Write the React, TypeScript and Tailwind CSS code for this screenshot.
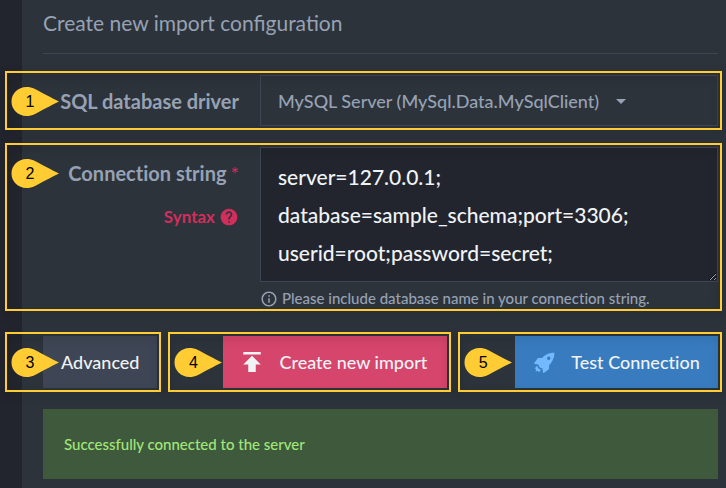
import React, { useState } from 'react';
import { IoMdRocket } from 'react-icons/io';
import { MdArrowDropDown, MdHelp, MdInfoOutline, MdPublish } from 'react-icons/md';

interface CalloutProps {
  step: number;
  className?: string;
  children: React.ReactNode;
}

// Highlighted area with a numbered marker on its left edge
const Callout: React.FC<CalloutProps> = ({ step, className = '', children }) => {
  return (
    <div className={`relative p-1 ${className}`}>
      {children}
      <div className="pointer-events-none absolute inset-0 border-2 border-[#ffcc33] drop-shadow-[0_4px_4px_rgba(0,0,0,0.3)]" />
      <div className="pointer-events-none absolute left-1.5 top-4 h-[29px] w-12">
        <svg viewBox="0 0 48 29" className="h-full w-full" aria-hidden="true">
          <path
            d="M48 14.5C40 18.5 31 23 25 26.5C21.5 28.5 18 29 15.5 29C7 29 0.5 22.5 0.5 14.5S7 0 15.5 0C18 0 21.5 0.5 25 2.5C31 6 40 10.500 48 14.5Z"
            fill="#ffcc33"
          />
        </svg>
        <span className="absolute inset-y-0 left-0 w-[38px] text-center font-['Liberation_Sans',sans-serif] text-base leading-[29px] font-normal text-black">
          {step}
        </span>
      </div>
    </div>
  );
};

const App: React.FC = () => {
  const [driver, setDriver] = useState('MySql.Data.MySqlClient');
  const [connection, setConnection] = useState(
    'server=127.0.0.1;\ndatabase=sample_schema;port=3306;\nuserid=root;password=secret;'
  );

  return (
    <div className="flex min-h-screen bg-[#2d333b] font-['Lato',sans-serif] text-[#96a2b4]">
      <aside className="w-[22px] shrink-0 bg-[#23252e]" />

      <main className="min-w-0 flex-1 pb-2 pl-[21px] pr-2">
        <h1 className="border-b border-[#3e4655] pb-4 pt-2 text-[21px] leading-[29px]">
          Create new import configuration
        </h1>

        <form
          className="-ml-[38px] -mr-1 mt-[17px] [font-variant-ligatures:none]"
          onSubmit={(e) => e.preventDefault()}
        >
          <Callout step={1} className="flex items-center">
            <label htmlFor="driver" className="w-[251px] shrink-0 pr-[21px] text-right text-xl font-bold">
              SQL database driver
            </label>
            <div className="flex h-[51px] min-w-0 flex-1 items-center border border-[#3e4655] pl-[17px]">
              <select
                id="driver"
                value={driver}
                onChange={(e) => setDriver(e.target.value)}
                className="h-full appearance-none bg-transparent text-lg font-medium outline-none"
              >
                <option value="MySql.Data.MySqlClient">MySQL Server (MySql.Data.MySqlClient)</option>
              </select>
              <MdArrowDropDown className="pointer-events-none ml-2 shrink-0" size={24} />
            </div>
          </Callout>

          <Callout step={2} className="mt-[13px] flex items-start">
            <div className="w-[251px] shrink-0 pr-[21px] pt-3 text-right">
              <label htmlFor="connection" className="flex justify-end gap-1 text-xl leading-7 font-bold">
                Connection string
                <span className="font-normal text-[#d12e5c]">*</span>
              </label>
              <a
                href="#syntax"
                className="mt-4 flex items-center justify-end gap-1 text-[17px] leading-7 font-bold text-[#d12e5c]"
              >
                Syntax
                <MdHelp size={20} />
              </a>
            </div>
            <div className="min-w-0 flex-1">
              <textarea
                id="connection"
                rows={3}
                value={connection}
                onChange={(e) => setConnection(e.target.value)}
                className="block w-full resize-y overflow-hidden border border-[#3e4655] bg-[#23252e] pb-[9px] pl-[17px] pr-4 pt-2.5 text-[21px] leading-[38px] font-medium text-[#f0f3f5] outline-none"
              />
              <p className="flex items-center gap-1 pt-2 text-[15px] leading-[17px] font-medium">
                <MdInfoOutline size={18} className="-my-1" />
                Please include database name in your connection string.
              </p>
            </div>
          </Callout>

          <div className="mt-[21px] flex gap-[7px] text-lg font-medium text-[#f0f3f5]">
            <Callout step={3} className="pl-[38px]">
              <button type="button" className="h-[52px] bg-[#3e4655] px-[18px]">
                Advanced
              </button>
            </Callout>
            <Callout step={4} className="pl-[55px]">
              <button type="submit" className="flex h-[52px] items-center gap-3 bg-[#d6456b] pl-3.5 pr-5">
                <MdPublish size={30} />
                Create new import
              </button>
            </Callout>
            <Callout step={5} className="flex-1 pl-[57px]">
              <button
                type="button"
                className="flex h-[52px] w-full items-center gap-3 bg-[#387cbf] pl-4 pr-[18px] whitespace-nowrap"
              >
                <IoMdRocket className="shrink-0 rotate-45 text-[#73b9ff]" size={28} />
                Test Connection
              </button>
            </Callout>
          </div>
        </form>

        <div role="status" className="mt-[17px] bg-[#3f593d] px-[21px] py-[23px] text-[15px] leading-6 font-medium text-[#a0e878]">
          Successfully connected to the server
        </div>
      </main>
    </div>
  );
};

export default App;
